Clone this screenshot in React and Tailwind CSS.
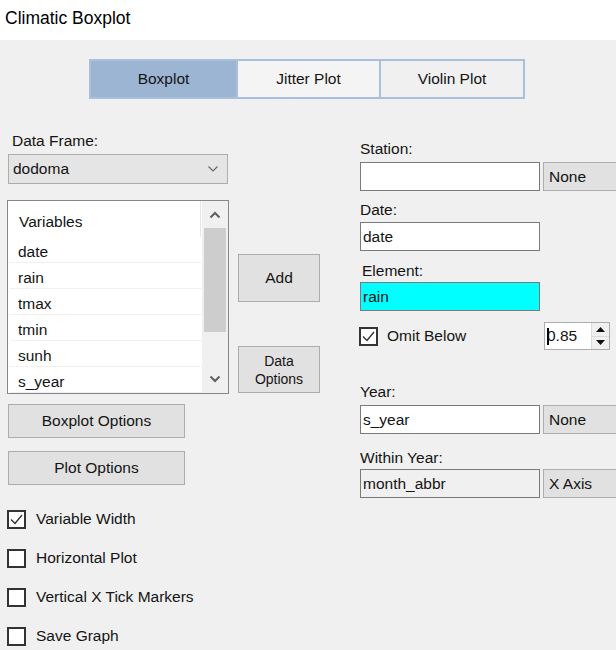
import React from 'react';

const Check = ({ checked }) => (
  <div className="w-[19px] h-[19px] border-2 border-[#333333] bg-white flex items-center justify-center shrink-0">
    {checked && (
      <svg width="15" height="15" viewBox="0 0 15 15">
        <path d="M2 7.5 L6 11.5 L13 3" fill="none" stroke="#333333" strokeWidth="1.4" />
      </svg>
    )}
  </div>
);

const Chevron = ({ up, className, stroke = '#555555', width = 1.3 }) => (
  <svg width="12" height="8" viewBox="0 0 12 8" className={className}>
    <path d={up ? 'M1.5 6.5 L6 2 L10.5 6.5' : 'M1.5 1.5 L6 6 L10.5 1.5'} fill="none" stroke={stroke} strokeWidth={width} />
  </svg>
);

const TextBox = ({ value, bg = 'bg-white' }) => (
  <div className={'w-[180px] h-[29px] border border-[#7a7a7a] flex items-center pl-[2px] shrink-0 ' + bg}>
    {value}
  </div>
);

const SideCombo = ({ value }) => (
  <div className="w-[100px] h-[29px] border border-[#adadad] bg-[#e1e1e1] flex items-center pl-[5px] shrink-0">{value}</div>
);

const Btn = ({ children, className }) => (
  <div className={'border border-[#adadad] bg-[#e1e1e1] flex items-center justify-center text-center ' + className}>{children}</div>
);

export default function App() {
  const variables = ['date', 'rain', 'tmax', 'tmin', 'sunh', 's_year'];
  const options = [
    { label: 'Variable Width', checked: true },
    { label: 'Horizontal Plot', checked: false },
    { label: 'Vertical X Tick Markers', checked: false },
    { label: 'Save Graph', checked: false },
  ];

  return (
    <div className="w-[616px] h-[650px] overflow-hidden bg-[#f0f0f0] font-['Liberation_Sans',Arial,sans-serif] text-[15.5px] leading-5 text-[#141414]">
      <div className="h-10 bg-white pl-[5px] pt-[6px] text-[17.5px] leading-6 text-black">Climatic Boxplot</div>

      {/* plot type tabs */}
      <div className="mt-[19px] ml-[89px] flex w-[436px] h-10 border-2 border-[#a8c0dc]">
        <div className="w-[145px] bg-[#9bb5d3] flex items-center justify-center">Boxplot</div>
        <div className="w-[143px] border-l-2 border-[#a8c0dc] bg-[#f4f4f4] flex items-center justify-center">Jitter Plot</div>
        <div className="flex-1 border-l-2 border-[#a8c0dc] flex items-center justify-center">Violin Plot</div>
      </div>

      <div className="flex w-[700px]">
        {/* left column */}
        <div className="ml-[7px] w-[222px] flex flex-col shrink-0">
          <div className="mt-[32px] pl-[5px]">Data Frame:</div>
          <div className="mt-[3px] ml-px w-[220px] h-[30px] border border-[#adadad] bg-[#e5e5e5] flex items-center justify-between pl-[4px] pr-[8px]">
            <span>dodoma</span>
            <Chevron stroke="#666666" width={1.1} />
          </div>

          <div className="mt-4 h-[194px] border border-[#828790] bg-white flex">
            <div className="flex-1 pl-[2px]">
              <div className="h-[36px] pt-[11px] pl-[9px] border-r border-[#e5e5e5] mr-[1px]">Variables</div>
              {variables.map((v) => (
                <div key={v} className="h-[26px] pt-[5px] pl-[8px] border-b border-[#f0f0f0]">{v}</div>
              ))}
            </div>
            <div className="w-[26px] bg-[#f0f0f0] flex flex-col items-center">
              <div className="h-[27px] flex items-center justify-center">
                <Chevron up stroke="#606060" width={2} />
              </div>
              <div className="w-[22px] h-[104px] bg-[#cdcdcd]" />
              <div className="flex-1" />
              <div className="h-[27px] flex items-start pt-[9px] justify-center">
                <Chevron stroke="#606060" width={2} />
              </div>
            </div>
          </div>

          <Btn className="mt-[10px] ml-px w-[177px] h-[34px]">Boxplot Options</Btn>
          <Btn className="mt-[13px] ml-px w-[177px] h-[34px]">Plot Options</Btn>

          <div className="mt-[24px] flex flex-col gap-[19px]">
            {options.map((o) => (
              <div key={o.label} className="h-5 flex items-center gap-[10px] whitespace-nowrap">
                <Check checked={o.checked} />
                <span>{o.label}</span>
              </div>
            ))}
          </div>
        </div>

        {/* middle buttons */}
        <div className="ml-[9px] w-[82px] flex flex-col shrink-0">
          <Btn className="mt-[155px] h-[48px]">Add</Btn>
          <Btn className="mt-[44px] h-[47px] text-[14px] leading-[18px]">
            Data
            <br />
            Options
          </Btn>
        </div>

        {/* right column */}
        <div className="ml-[40px] w-[300px] flex flex-col shrink-0">
          <div className="mt-[40px]">Station:</div>
          <div className="mt-[3px] flex gap-[3px]">
            <TextBox value="" />
            <SideCombo value="None" />
          </div>

          <div className="mt-[9px]">Date:</div>
          <div className="mt-[2px]">
            <TextBox value="date" />
          </div>

          <div className="mt-[10px] pl-[2px]">Element:</div>
          <div className="mt-px">
            <TextBox value="rain" bg="bg-[#00ffff]" />
          </div>

          <div className="mt-[11px] w-[250px] h-[28px] flex items-center">
            <div className="-ml-px">
              <Check checked />
            </div>
            <span className="ml-[9px]">Omit Below</span>
            <div className="ml-auto w-[66px] h-[28px] border border-[#adadad] bg-white flex">
              <div className="flex-1 relative flex items-center pl-[2px]">
                <span>0.85</span>
                <div className="absolute left-[2px] top-[5px] w-[2px] h-[17px] bg-black" />
              </div>
              <div className="w-[18px] flex flex-col border-l border-[#dadada] bg-[#f0f0f0]">
                <div className="flex-1 flex items-center justify-center border-b border-[#dadada]">
                  <svg width="9" height="5" viewBox="0 0 9 5"><path d="M0 5 L4.5 0 L9 5 Z" fill="#111111" /></svg>
                </div>
                <div className="flex-1 flex items-center justify-center">
                  <svg width="9" height="5" viewBox="0 0 9 5"><path d="M0 0 L4.5 5 L9 0 Z" fill="#111111" /></svg>
                </div>
              </div>
            </div>
          </div>

          <div className="mt-[32px]">Year:</div>
          <div className="mt-[3px] flex gap-[3px]">
            <TextBox value="s_year" />
            <SideCombo value="None" />
          </div>

          <div className="mt-[14px]">Within Year:</div>
          <div className="mt-px flex gap-[3px]">
            <TextBox value="month_abbr" bg="bg-[#f0f0f0]" />
            <SideCombo value="X Axis" />
          </div>
        </div>
      </div>
    </div>
  );
}
